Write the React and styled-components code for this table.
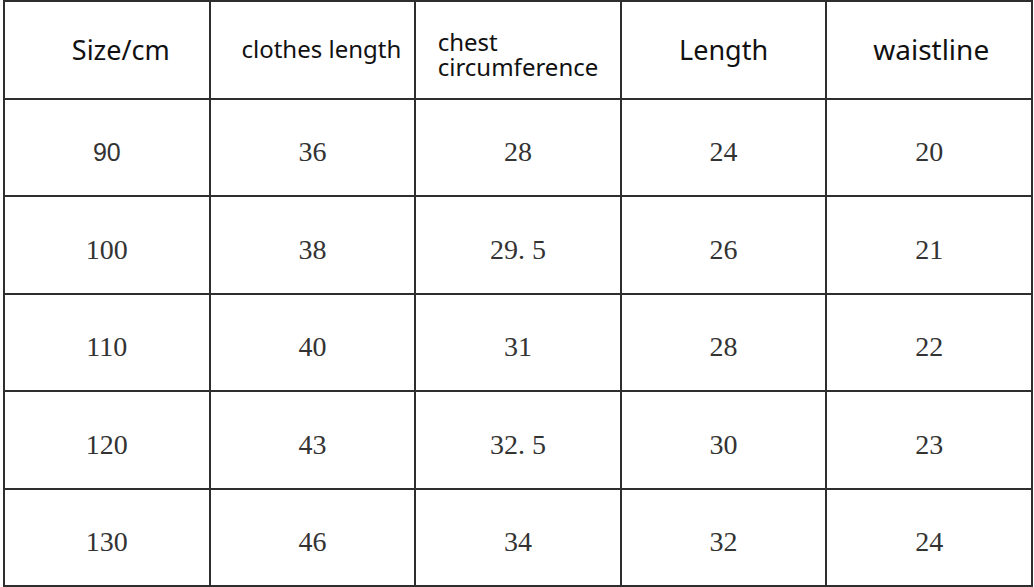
import React from "react";
import styled, { createGlobalStyle } from "styled-components";

const LINE = "#2e2e2e";

const GlobalStyle = createGlobalStyle`
  html, body { margin: 0; padding: 0; background: #fff; }
  body { overflow: hidden; }
`;

const Sheet = styled.div`
  margin-left: 3px;
  width: 1030px;
  height: 587px;
  box-sizing: border-box;
  display: grid;
  grid-template-columns: repeat(5, 1fr);
  grid-template-rows: repeat(6, 1fr);
  border-left: 2px solid ${LINE};
  border-top: 2px solid ${LINE};
`;

const Box = styled.div`
  box-sizing: border-box;
  border-right: 2px solid ${LINE};
  border-bottom: 2px solid ${LINE};
  display: flex;
  align-items: center;
  justify-content: center;
  min-width: 0;
`;

const HeadCell = styled(Box)`
  font-family: "Noto Sans", "Liberation Sans", sans-serif;
  color: #111;
  font-size: ${p => p.$size}px;
  line-height: ${p => p.$lh || 1.2};
  padding-left: ${p => p.$shift || 0}px;
  padding-top: ${p => p.$drop || 0}px;
  text-align: left;
  white-space: nowrap;
`;

const Cell = styled(Box)`
  font-family: ${p => (p.$sans ? '"Liberation Sans", Arial, sans-serif' : '"Liberation Serif", "DejaVu Serif", serif')};
  font-size: ${p => (p.$sans ? 25 : 28)}px;
  color: #333;
  padding-top: 10px;
`;

const heads = [
  { label: "Size/cm", size: 27, shift: 28, drop: -2 },
  { label: "clothes length", size: 24, shift: 18 },
  { label: <>chest<br />circumference</>, size: 24, drop: 10, lh: 1.04 },
  { label: "Length", size: 27, drop: -2 },
  { label: "waistline", size: 28, shift: 4 },
];

const rows = [
  ["90", "36", "28", "24", "20"],
  ["100", "38", "29. 5", "26", "21"],
  ["110", "40", "31", "28", "22"],
  ["120", "43", "32. 5", "30", "23"],
  ["130", "46", "34", "32", "24"],
];

export default function App() {
  return (
    <>
      <GlobalStyle />
      <Sheet>
        {heads.map((h, i) => (
          <HeadCell key={i} $size={h.size} $shift={h.shift} $drop={h.drop} $lh={h.lh}>
            <span>{h.label}</span>
          </HeadCell>
        ))}
        {rows.map((r, ri) =>
          r.map((v, ci) => (
            <Cell key={ri + "-" + ci} $sans={ri === 0 && ci === 0}>
              {v}
            </Cell>
          ))
        )}
      </Sheet>
    </>
  );
}
